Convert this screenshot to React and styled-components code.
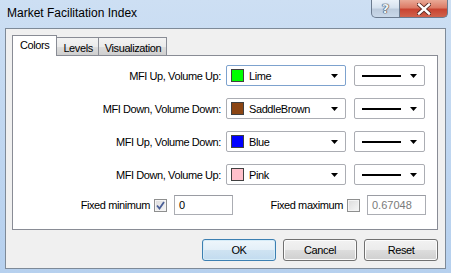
import React from 'react';
import styled, { createGlobalStyle, css } from 'styled-components';

const GlobalStyle = createGlobalStyle`
  html, body {
    margin: 0;
    padding: 0;
    width: 451px;
    height: 273px;
    overflow: hidden;
  }
  body {
    font-family: "Liberation Sans", Arial, sans-serif;
    font-size: 11px;
    letter-spacing: -0.4px;
    color: #000;
  }
`;

const Frame = styled.div`
  width: 451px;
  height: 273px;
  box-sizing: border-box;
  padding: 0 5px 4px 5px;
  display: flex;
  flex-direction: column;
  background: linear-gradient(to bottom, #cddff3 0%, #c2d8f1 40%, #b6d0ee 100%);
`;

const TitleBar = styled.div`
  height: 28px;
  display: flex;
  justify-content: space-between;
  align-items: flex-start;
  flex-shrink: 0;
`;

const Title = styled.div`
  font-size: 12px;
  line-height: 14px;
  letter-spacing: 0;
  margin: 6px 0 0 2px;
  color: #000;
`;

const Caption = styled.div`
  display: flex;
  margin-right: -2px;
`;

const CaptionButton = styled.div`
  height: 18px;
  box-sizing: border-box;
  display: flex;
  align-items: center;
  justify-content: center;
  border: 1px solid #6b7b8f;
  border-top: none;
  ${p => p.close ? css`
    width: 48px;
    border-left: none;
    border-radius: 0 0 5px 0;
    background: linear-gradient(to bottom, #e9a996 0%, #dc7b66 45%, #c94431 55%, #d0634c 100%);
  ` : css`
    width: 29px;
    border-radius: 0 0 0 5px;
    background: linear-gradient(to bottom, #eaf1f9 0%, #d6e2ef 45%, #bccbdd 55%, #c9d8e9 100%);
  `}
`;

const HelpGlyph = styled.span`
  font-family: "DejaVu Sans", sans-serif;
  font-weight: bold;
  font-size: 13px;
  line-height: 13px;
  letter-spacing: 0;
  color: #eef2f7;
  text-shadow: 0 0 1px #2f3846, 0 0 1px #2f3846, 0 0 1px #2f3846;
`;

const Client = styled.div`
  flex: 1;
  border: 1px solid #7e8a98;
  background: #f0f0f0;
  display: flex;
  flex-direction: column;
`;

const TabStrip = styled.div`
  display: flex;
  align-items: flex-end;
  height: 20px;
  margin: 6px 0 0 6px;
`;

const Tab = styled.div`
  box-sizing: border-box;
  border: 1px solid #898c95;
  border-bottom: none;
  display: flex;
  align-items: center;
  position: relative;
  ${p => p.active ? css`
    height: 21px;
    margin-bottom: -1px;
    background: #fff;
    z-index: 1;
    padding: 0 7px 3px 7px;
  ` : css`
    height: 18px;
    margin-left: -1px;
    background: linear-gradient(to bottom, #f3f3f3 0%, #ebebeb 50%, #dddddd 51%, #cfcfcf 100%);
    padding: 2px 5px 0 6px;
  `}
`;

const Panel = styled.div`
  margin: 0 7px 0 6px;
  height: 175px;
  box-sizing: border-box;
  border: 1px solid #898c95;
  background: #fff;
  padding-top: 9px;
  display: flex;
  flex-direction: column;
`;

const ColorGrid = styled.div`
  display: grid;
  grid-template-columns: 208px 120px 74px;
  column-gap: 5px;
  row-gap: 12px;
  align-items: center;

  & > :nth-child(3n) {
    margin-left: 3px;
  }
`;

const Label = styled.div`
  text-align: right;
  white-space: nowrap;
`;

const Combo = styled.div`
  height: 21px;
  box-sizing: border-box;
  border: 1px solid ${p => (p.focused ? '#7da2ce' : '#abadb3')};
  border-radius: 2px;
  background: #fff;
  display: flex;
  align-items: center;
  padding: 0 7px 0 4px;
`;

const Swatch = styled.span`
  width: 13px;
  height: 13px;
  box-sizing: border-box;
  border: 1px solid #404040;
  background: ${p => p.color};
  margin-right: 5px;
  flex-shrink: 0;
`;

const ComboText = styled.span`
  flex: 1;
  white-space: nowrap;
`;

const LineSample = styled.span`
  flex: 1;
  height: 2px;
  background: #000;
  margin: 0 9px 0 3px;
`;

const Arrow = () => (
  <svg width="7" height="4" viewBox="0 0 7 4">
    <path d="M0 0h7L3.5 4z" fill="#000" />
  </svg>
);

const FixedRow = styled.div`
  display: flex;
  align-items: center;
  margin-top: 10px;
`;

const FixedLabel = styled.div`
  width: ${p => p.w}px;
  text-align: right;
  white-space: nowrap;
  margin-right: 4px;
`;

const Check = styled.span`
  width: 13px;
  height: 13px;
  box-sizing: border-box;
  border: 1px solid #8e8f8f;
  background: linear-gradient(135deg, #dcdcdc 0%, #f7f7f7 100%);
  box-shadow: inset 0 0 0 1px #f4f4f4;
  display: flex;
  align-items: center;
  justify-content: center;
  margin-right: 7px;
`;

const Edit = styled.div`
  width: 59px;
  height: 20px;
  box-sizing: border-box;
  border: 1px solid #abadb3;
  border-top-color: #9a9ca3;
  background: #fff;
  padding: 0 4px;
  display: flex;
  align-items: center;
  letter-spacing: 0;
  color: ${p => (p.disabled ? '#7a7a7a' : '#000')};
`;

const Buttons = styled.div`
  display: flex;
  justify-content: flex-end;
  gap: 7px;
  margin: 9px 7px 0 0;
`;

const Button = styled.div`
  width: 74px;
  height: 22px;
  box-sizing: border-box;
  border: 1px solid ${p => (p.primary ? '#3c7fb1' : '#707070')};
  border-radius: 3px;
  display: flex;
  align-items: center;
  justify-content: center;
  background: ${p => p.primary
    ? 'linear-gradient(to bottom, #eef6fb 0%, #e3eff8 50%, #cfe3f2 51%, #c2dbef 100%)'
    : 'linear-gradient(to bottom, #f2f2f2 0%, #ebebeb 50%, #dddddd 51%, #cfcfcf 100%)'};
  box-shadow: inset 0 0 0 1px ${p => (p.primary ? '#d6ecf8' : '#fcfcfc')};
`;

const rows = [
  { label: 'MFI Up, Volume Up:', name: 'Lime', color: '#00ff00', focused: true },
  { label: 'MFI Down, Volume Down:', name: 'SaddleBrown', color: '#8b4513' },
  { label: 'MFI Up, Volume Down:', name: 'Blue', color: '#0000ff' },
  { label: 'MFI Down, Volume Up:', name: 'Pink', color: '#ffc0cb' },
];

export default function App() {
  return (
    <>
      <GlobalStyle />
      <Frame>
        <TitleBar>
          <Title>Market Facilitation Index</Title>
          <Caption>
            <CaptionButton>
              <HelpGlyph>?</HelpGlyph>
            </CaptionButton>
            <CaptionButton close>
              <svg width="14" height="12" viewBox="0 0 14 12">
                <path d="M2 1.5L12 10.5M12 1.5L2 10.5" stroke="#5a2a22" strokeWidth="4.2" strokeLinecap="square" />
                <path d="M2 1.5L12 10.5M12 1.5L2 10.5" stroke="#fff" strokeWidth="2.4" strokeLinecap="square" />
              </svg>
            </CaptionButton>
          </Caption>
        </TitleBar>
        <Client>
          <TabStrip>
            <Tab active>Colors</Tab>
            <Tab>Levels</Tab>
            <Tab>Visualization</Tab>
          </TabStrip>
          <Panel>
            <ColorGrid>
              {rows.map(r => (
                <React.Fragment key={r.label}>
                  <Label>{r.label}</Label>
                  <Combo focused={r.focused}>
                    <Swatch color={r.color} />
                    <ComboText>{r.name}</ComboText>
                    <Arrow />
                  </Combo>
                  <Combo>
                    <LineSample />
                    <Arrow />
                  </Combo>
                </React.Fragment>
              ))}
            </ColorGrid>
            <FixedRow>
              <FixedLabel w={137}>Fixed minimum</FixedLabel>
              <Check>
                <svg width="9" height="9" viewBox="0 0 9 9">
                  <path d="M1 4.5L3.5 7.5L8 1" fill="none" stroke="#4a5f97" strokeWidth="1.8" />
                </svg>
              </Check>
              <Edit>0</Edit>
              <FixedLabel w={110}>Fixed maximum</FixedLabel>
              <Check />
              <Edit disabled>0.67048</Edit>
            </FixedRow>
          </Panel>
          <Buttons>
            <Button primary>OK</Button>
            <Button>Cancel</Button>
            <Button>Reset</Button>
          </Buttons>
        </Client>
      </Frame>
    </>
  );
}
